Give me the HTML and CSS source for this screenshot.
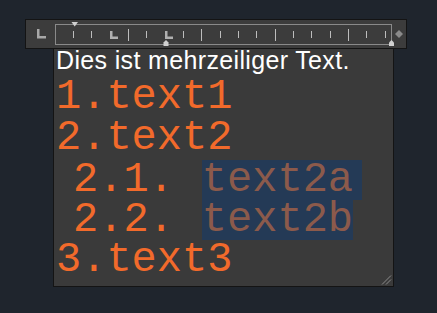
FILE: index.html
```html
<!DOCTYPE html>
<html lang="de">
<head>
    <meta charset="UTF-8">
    <title>Mehrzeiliger Text</title>
    <link rel="stylesheet" href="styles.css">
</head>
<body>
    <div class="wrap">
        <div class="ruler-bar">
            <svg class="ruler" width="380" height="28" viewBox="0 0 380 28">
                <!-- tab type button -->
                <rect x="11" y="9" width="2.5" height="9" fill="#a8a8a8"/>
                <rect x="11" y="16" width="9" height="2.5" fill="#a8a8a8"/>
                <!-- frame -->
                <rect x="29.5" y="4.5" width="336" height="20" fill="none" stroke="#8a8a8a"/>
                <g fill="#bdbdbd">
                    <rect x="47" y="11" width="1" height="7"/>
                    <rect x="65" y="11" width="1" height="7"/>
                    <rect x="102" y="9" width="1" height="12"/>
                    <rect x="120" y="11" width="1" height="7"/>
                    <rect x="157" y="11" width="1" height="7"/>
                    <rect x="175" y="9" width="1" height="12"/>
                    <rect x="194" y="11" width="1" height="7"/>
                    <rect x="212" y="11" width="1" height="7"/>
                    <rect x="230" y="11" width="1" height="7"/>
                    <rect x="249" y="9" width="1" height="12"/>
                    <rect x="267" y="11" width="1" height="7"/>
                    <rect x="285" y="11" width="1" height="7"/>
                    <rect x="304" y="11" width="1" height="7"/>
                    <rect x="322" y="9" width="1" height="12"/>
                    <rect x="340" y="11" width="1" height="7"/>
                    <rect x="359" y="11" width="1" height="7"/>
                </g>
                <!-- tab stops -->
                <g fill="#b0b0b0">
                    <rect x="84" y="11" width="2.5" height="8"/>
                    <rect x="84" y="16.5" width="8" height="2.5"/>
                    <rect x="139" y="11" width="2.5" height="8"/>
                    <rect x="139" y="16.5" width="8" height="2.5"/>
                </g>
                <!-- indent markers -->
                <polygon points="45.5,2 52,2 48.7,6.5" fill="#d0d0d0"/>
                <polygon points="137.5,26 137.5,22.5 140,20 142.5,22.5 142.5,26" fill="#d0d0d0"/>
                <polygon points="363,26 363,22.5 365.5,20 368,22.5 368,26" fill="#d0d0d0"/>
                <polygon points="373,10 377,14 373,18 369,14" fill="#8a8a8a"/>
            </svg>
        </div>

        <div class="editor">
            <div class="plain">Dies ist mehrzeiliger Text.</div>
            <div class="row first">1.text1</div>
            <div class="row second">2.text2</div>
            <div class="row sub third"><span class="num">2.1.</span><span class="hl wide">text2a</span></div>
            <div class="row sub"><span class="num">2.2.</span><span class="hl">text2b</span></div>
            <div class="row">3.text3</div>

            <svg class="grip" width="11" height="10" viewBox="0 0 11 10">
                <line x1="1" y1="9.5" x2="10" y2="0.5" stroke="#8a8a8a"/>
                <line x1="5" y1="9.5" x2="10" y2="4.5" stroke="#8a8a8a"/>
            </svg>
        </div>
    </div>
</body>
</html>
```

FILE: styles.css
```css
body {
    margin: 0;
    background-color: #1f252d;
    font-family: "Liberation Sans", Arial, sans-serif;
}
.wrap {
    padding: 19px 0 0 25px;
}
.ruler-bar {
    width: 380px;
    height: 28px;
    background: #3c3c3c;
    border: 1px solid #141414;
    display: flex;
}
.ruler {
    display: block;
}
.editor {
    position: relative;
    width: 337px;
    height: 237px;
    margin-left: 28px;
    padding-left: 2px;
    background: #3a3a3a;
    border: 1px solid #141414;
    border-top: none;
}
.plain {
    font-size: 25px;
    line-height: 22px;
    letter-spacing: 0.35px;
    color: #ffffff;
    margin-bottom: 6px;
}
.row {
    font-family: "Liberation Mono", "Courier New", monospace;
    font-size: 42px;
    line-height: 40px;
    height: 40px;
    color: #f26a2b;
    white-space: pre;
}
.second {
    margin-top: 1px;
}
.third {
    margin-top: 2px;
}
.sub {
    padding-left: 17px;
}
.hl {
    display: inline-block;
    margin-left: 28px;
    height: 40px;
    line-height: 40px;
    background: #243a56;
    color: #8c5a4b;
}
.wide {
    padding-right: 9px;
}
.grip {
    position: absolute;
    right: 1px;
    bottom: 1px;
}
```
